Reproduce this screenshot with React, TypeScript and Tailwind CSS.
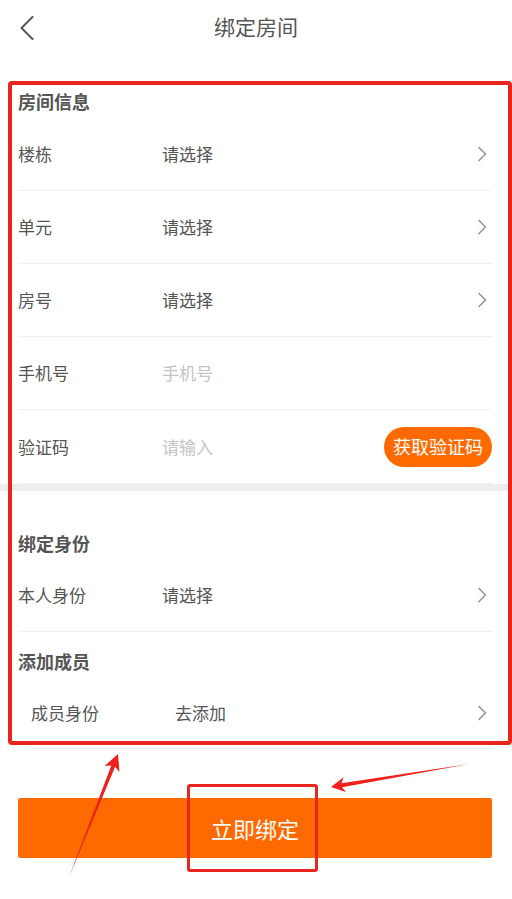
import React from "react";

type RowProps = {
  label: string;
  value: string;
  placeholder?: boolean;
  arrow?: boolean;
  right?: React.ReactNode;
  className?: string;
};

const Chevron = () => (
  <svg width="10" height="16" viewBox="0 0 10 16" className="mr-[5px]">
    <path d="M2 1.5 L8.5 8 L2 14.5" fill="none" stroke="#999" strokeWidth="1.7" strokeLinecap="round" strokeLinejoin="round" />
  </svg>
);

// a single form line: label, value and the thing on the right
const Row = ({ label, value, placeholder, arrow, right, className }: RowProps) => (
  <div className={`flex items-center border-b border-[#f0f0f0] ${className ?? "h-[73px]"}`}>
    <span className="w-[144px] text-[17px] text-[#555]">{label}</span>
    <span className={`flex-1 text-[17px] ${placeholder ? "text-[#c4c4c4]" : "text-[#555]"}`}>{value}</span>
    {arrow && <Chevron />}
    {right}
  </div>
);

const App = () => {
  return (
    <div className="relative w-[512px] h-[899px] bg-white overflow-hidden font-['Noto_Sans_CJK_SC','Noto_Sans',sans-serif]">
      {/* header */}
      <div className="grid grid-cols-[60px_1fr_60px] items-center h-[54px]">
        <div className="pl-[20px] pt-[2px]">
          <svg width="14" height="24" viewBox="0 0 14 24">
            <path d="M12.5 1 L1.5 12 L12.5 23" fill="none" stroke="#555" strokeWidth="2" strokeLinecap="round" strokeLinejoin="round" />
          </svg>
        </div>
        <h1 className="text-center text-[21px] text-[#555]">绑定房间</h1>
        <div />
      </div>

      {/* room info */}
      <div className="mt-[30px] pl-[18px] pr-[20px]">
        <div className="h-[34px] flex items-center text-[18px] font-bold text-[#555]">房间信息</div>
        <Row label="楼栋" value="请选择" arrow className="h-[73px]" />
        <Row label="单元" value="请选择" arrow className="h-[73px]" />
        <Row label="房号" value="请选择" arrow className="h-[73px]" />
        <Row label="手机号" value="手机号" placeholder className="h-[73px]" />
        <Row
          label="验证码"
          value="请输入"
          placeholder
          className="h-[74px]"
          right={
            <button className="w-[108px] h-[40px] rounded-full bg-[#ff6a00] text-white text-[18px]">
              获取验证码
            </button>
          }
        />
      </div>
      <div className="h-[7px] bg-[#eeeeee]" />

      {/* identity + members */}
      <div className="pl-[18px] pr-[20px]">
        <div className="h-[68px] pt-[36px] flex items-center text-[18px] font-bold text-[#555]">绑定身份</div>
        <Row label="本人身份" value="请选择" arrow className="h-[73px]" />
        <div className="h-[45px] pt-[14px] flex items-center text-[18px] font-bold text-[#555]">添加成员</div>
        <Row label="成员身份" value="去添加" arrow className="h-[72px] ml-[12px] pl-[1px]" />
      </div>

      <button className="mt-[49px] ml-[18px] w-[474px] h-[60px] rounded-[2px] bg-[#ff6a00] text-white text-[22px]">
        立即绑定
      </button>

      {/* red annotation overlays */}
      <div className="absolute left-[8px] top-[81px] w-[504px] h-[664px] border-[4px] border-[#e8261e] rounded-[4px] pointer-events-none" />
      <div className="absolute left-[187px] top-[784px] w-[131px] h-[88px] border-[3px] border-[#e8261e] rounded-[3px] pointer-events-none" />
      <svg className="absolute left-0 top-0 pointer-events-none" width="512" height="899" viewBox="0 0 512 899">
        <polygon
          points="69,877 115.1,766.8 119.5,771.9 118,754 104.7,765.9 111.3,765.4"
          fill="#f0201c"
        />
        <polygon
          points="469,764 342.1,787.2 346,792.1 331,787 343.6,777.3 341.5,783.2"
          fill="#f0201c"
        />
      </svg>
    </div>
  );
};

export default App;
